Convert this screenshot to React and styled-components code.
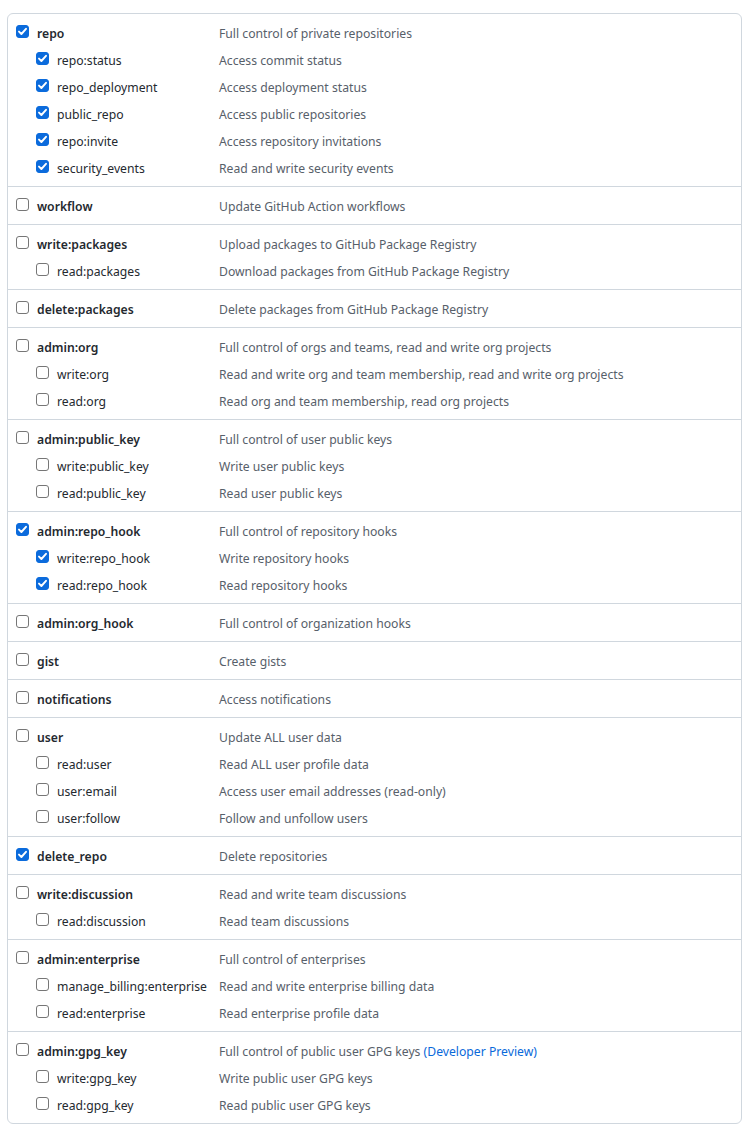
import React from 'react'
import styled, { createGlobalStyle } from 'styled-components'

const GlobalStyle = createGlobalStyle`
  body {
    margin: 0;
    background: #ffffff;
    font-family: "Noto Sans", "Liberation Sans", sans-serif;
    font-size: 12.2px;
    color: #24292f;
  }
`

const Page = styled.div`
  padding: 13px 12px 9px 7px;
`

const Box = styled.div`
  border: 1px solid #d0d7de;
  border-radius: 6px;
  background: #fff;
`

const Group = styled.div`
  padding: 5px 0;
  & + & {
    border-top: 1px solid #d0d7de;
  }
`

const Row = styled.div`
  display: flex;
  align-items: center;
  height: 27px;
  padding-left: 8px;
`

const Name = styled.label`
  display: flex;
  align-items: center;
  gap: 8px;
  width: ${p => (p.$sub ? 183 : 203)}px;
  padding-left: ${p => (p.$sub ? 20 : 0)}px;
  font-weight: ${p => (p.$sub ? 400 : 600)};
  color: #24292f;
  white-space: nowrap;
`

const NameText = styled.span`
  margin-top: 2px;
`

const Desc = styled.span`
  margin-top: 2px;
  color: #57606a;
  white-space: nowrap;
`

const Link = styled.a`
  color: #0969da;
  text-decoration: none;
`

const Box13 = styled.span`
  display: inline-flex;
  align-items: center;
  justify-content: center;
  width: 13px;
  height: 13px;
  box-sizing: border-box;
  border-radius: 3px;
  margin-top: -2px;
  flex: none;
  background: ${p => (p.$on ? '#0b6bdc' : '#fff')};
  border: 1px solid ${p => (p.$on ? '#0b6bdc' : '#767676')};
`

const Check = ({ on }) => (
  <Box13 $on={on}>
    {on && (
      <svg width="11" height="11" viewBox="0 0 11 11">
        <path d="M2 5.6 L4.4 8 L9 2.8" fill="none" stroke="#fff" strokeWidth="1.9" strokeLinecap="round" strokeLinejoin="round" />
      </svg>
    )}
  </Box13>
)

const groups = [
  [
    ['repo', 'Full control of private repositories', true],
    ['repo:status', 'Access commit status', true],
    ['repo_deployment', 'Access deployment status', true],
    ['public_repo', 'Access public repositories', true],
    ['repo:invite', 'Access repository invitations', true],
    ['security_events', 'Read and write security events', true],
  ],
  [['workflow', 'Update GitHub Action workflows']],
  [
    ['write:packages', 'Upload packages to GitHub Package Registry'],
    ['read:packages', 'Download packages from GitHub Package Registry'],
  ],
  [['delete:packages', 'Delete packages from GitHub Package Registry']],
  [
    ['admin:org', 'Full control of orgs and teams, read and write org projects'],
    ['write:org', 'Read and write org and team membership, read and write org projects'],
    ['read:org', 'Read org and team membership, read org projects'],
  ],
  [
    ['admin:public_key', 'Full control of user public keys'],
    ['write:public_key', 'Write user public keys'],
    ['read:public_key', 'Read user public keys'],
  ],
  [
    ['admin:repo_hook', 'Full control of repository hooks', true],
    ['write:repo_hook', 'Write repository hooks', true],
    ['read:repo_hook', 'Read repository hooks', true],
  ],
  [['admin:org_hook', 'Full control of organization hooks']],
  [['gist', 'Create gists']],
  [['notifications', 'Access notifications']],
  [
    ['user', 'Update ALL user data'],
    ['read:user', 'Read ALL user profile data'],
    ['user:email', 'Access user email addresses (read-only)'],
    ['user:follow', 'Follow and unfollow users'],
  ],
  [['delete_repo', 'Delete repositories', true]],
  [
    ['write:discussion', 'Read and write team discussions'],
    ['read:discussion', 'Read team discussions'],
  ],
  [
    ['admin:enterprise', 'Full control of enterprises'],
    ['manage_billing:enterprise', 'Read and write enterprise billing data'],
    ['read:enterprise', 'Read enterprise profile data'],
  ],
  [
    ['admin:gpg_key', 'Full control of public user GPG keys', false, true],
    ['write:gpg_key', 'Write public user GPG keys'],
    ['read:gpg_key', 'Read public user GPG keys'],
  ],
]

export default function App() {
  return (
    <Page>
      <GlobalStyle />
      <Box>
        {groups.map((rows, gi) => (
          <Group key={gi}>
            {rows.map(([name, desc, on, preview], ri) => (
              <Row key={name}>
                <Name $sub={ri > 0}>
                  <Check on={!!on} />
                  <NameText>{name}</NameText>
                </Name>
                <Desc>
                  {desc}
                  {preview && <> <Link href="#">(Developer Preview)</Link></>}
                </Desc>
              </Row>
            ))}
          </Group>
        ))}
      </Box>
    </Page>
  )
}
